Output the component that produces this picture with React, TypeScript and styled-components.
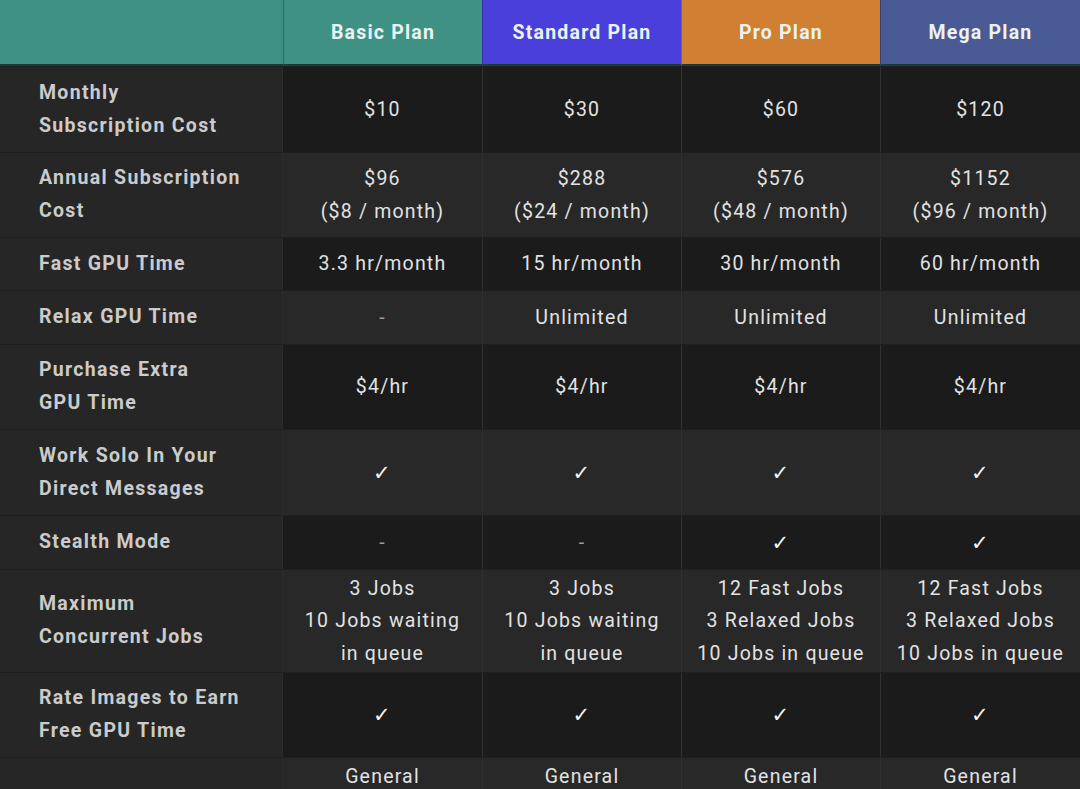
import React from "react";
import styled, { createGlobalStyle } from "styled-components";

const Global = createGlobalStyle`
  html, body { margin: 0; padding: 0; background: #1c1c1c; overflow: hidden; }
  body { font-family: Roboto, "Noto Sans", Arial, sans-serif; }
  *, *::before, *::after { box-sizing: border-box; }
`;

const Table = styled.div`
  width: 1080px;
  display: flex;
  flex-direction: column;
`;

const Row = styled.div<{ $h: number }>`
  display: grid;
  grid-template-columns: 283px 199px 199px 199px 200px;
  height: ${(p) => p.$h}px;
  flex-shrink: 0;
  border-bottom: 1px solid #1f1f1f;
`;

const HeadCell = styled.div<{ $bg: string }>`
  background: ${(p) => p.$bg};
  display: flex;
  align-items: center;
  justify-content: center;
  color: #eaf3f1;
  font-weight: 700;
  font-size: 19.5px;
  letter-spacing: 1.2px;
  border-left: 1px solid rgba(0, 0, 0, 0.25);
  border-bottom: 2px solid #1d3a36;
  padding-top: 1px;
  &:first-child { border-left: none; }
`;

const Label = styled.div`
  background: #262626;
  display: flex;
  align-items: center;
  padding-left: 39px;
  color: #cbcbcb;
  font-weight: 700;
  font-size: 19.5px;
  letter-spacing: 1.3px;
  line-height: 33px;
  border-right: 1px solid #2c2c2c;
  padding-bottom: 2px;
`;

const Value = styled.div<{ $dark: boolean }>`
  background: ${(p) => (p.$dark ? "#1b1b1b" : "#282828")};
  display: flex;
  flex-direction: column;
  align-items: center;
  justify-content: center;
  text-align: center;
  color: #e2e2e2;
  font-size: 19.5px;
  letter-spacing: 1.2px;
  line-height: 32.5px;
  border-left: 1px solid #303030;
  padding-top: 1px;
  &:nth-child(2) { border-left: none; }
`;

const Dash = styled.span`
  color: #9a9a9a;
`;

const Check = styled.span`
  font-family: "DejaVu Sans", sans-serif;
  font-weight: 700;
  color: #f4f4f4;
  font-size: 21px;
`;

type Cell = string | string[];

const headers = [
  { name: "", bg: "#3f9184" },
  { name: "Basic Plan", bg: "#3f9184" },
  { name: "Standard Plan", bg: "#4b3fdb" },
  { name: "Pro Plan", bg: "#d07f33" },
  { name: "Mega Plan", bg: "#4a5a94" },
];

const rows: { label: string[]; h: number; cells: Cell[] }[] = [
  { label: ["Monthly", "Subscription Cost"], h: 86, cells: ["$10", "$30", "$60", "$120"] },
  {
    label: ["Annual Subscription", "Cost"],
    h: 85,
    cells: [
      ["$96", "($8 / month)"],
      ["$288", "($24 / month)"],
      ["$576", "($48 / month)"],
      ["$1152", "($96 / month)"],
    ],
  },
  { label: ["Fast GPU Time"], h: 53, cells: ["3.3 hr/month", "15 hr/month", "30 hr/month", "60 hr/month"] },
  { label: ["Relax GPU Time"], h: 54, cells: ["-", "Unlimited", "Unlimited", "Unlimited"] },
  { label: ["Purchase Extra", "GPU Time"], h: 85, cells: ["$4/hr", "$4/hr", "$4/hr", "$4/hr"] },
  { label: ["Work Solo In Your", "Direct Messages"], h: 86, cells: ["✓", "✓", "✓", "✓"] },
  { label: ["Stealth Mode"], h: 54, cells: ["-", "-", "✓", "✓"] },
  {
    label: ["Maximum", "Concurrent Jobs"],
    h: 103,
    cells: [
      ["3 Jobs", "10 Jobs waiting", "in queue"],
      ["3 Jobs", "10 Jobs waiting", "in queue"],
      ["12 Fast Jobs", "3 Relaxed Jobs", "10 Jobs in queue"],
      ["12 Fast Jobs", "3 Relaxed Jobs", "10 Jobs in queue"],
    ],
  },
  { label: ["Rate Images to Earn", "Free GPU Time"], h: 85, cells: ["✓", "✓", "✓", "✓"] },
  {
    label: ["Usage Rights"],
    h: 103,
    cells: [
      ["General", "Commercial", "Terms"],
      ["General", "Commercial", "Terms"],
      ["General", "Commercial", "Terms"],
      ["General", "Commercial", "Terms"],
    ],
  },
];

const renderLine = (t: string, i: number) => {
  if (t === "✓") return <Check key={i}>✓</Check>;
  if (t === "-") return <Dash key={i}>-</Dash>;
  return <div key={i}>{t}</div>;
};

export default function App() {
  return (
    <>
      <Global />
      <Table>
        <Row $h={67}>
          {headers.map((h, i) => (
            <HeadCell key={i} $bg={h.bg}>
              {h.name}
            </HeadCell>
          ))}
        </Row>
        {rows.map((r, ri) => (
          <Row key={ri} $h={r.h}>
            <Label>
              <div>
                {r.label.map((l, i) => (
                  <div key={i}>{l}</div>
                ))}
              </div>
            </Label>
            {r.cells.map((c, ci) => (
              <Value key={ci} $dark={ri % 2 === 0}>
                {(Array.isArray(c) ? c : [c]).map(renderLine)}
              </Value>
            ))}
          </Row>
        ))}
      </Table>
    </>
  );
}
